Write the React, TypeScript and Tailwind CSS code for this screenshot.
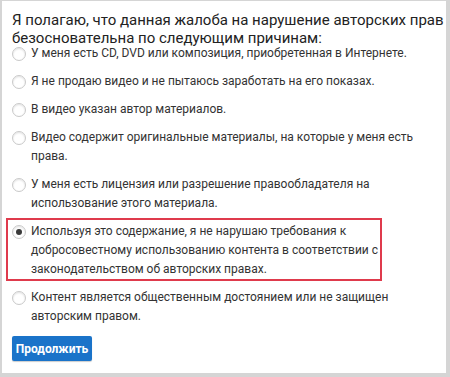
const options = [
  'У меня есть CD, DVD или композиция, приобретенная в Интернете.',
  'Я не продаю видео и не пытаюсь заработать на его показах.',
  'В видео указан автор материалов.',
  'Видео содержит оригинальные материалы, на которые у меня есть права.',
  'У меня есть лицензия или разрешение правообладателя на использование этого материала.',
  'Используя это содержание, я не нарушаю требования к добросовестному использованию контента в соответствии с законодательством об авторских правах.',
  'Контент является общественным достоянием или не защищен авторским правом.',
]

const SELECTED = 5

function Radio({ checked }: { checked: boolean }) {
  return (
    <span className="mt-[2.5px] flex h-[14px] w-[14px] shrink-0 items-center justify-center rounded-full border border-[#c9c9c9] bg-white shadow-[inset_0_1px_2px_rgba(0,0,0,0.12)]">
      {checked && <span className="h-[6px] w-[6px] rounded-full bg-[#3b3b3b]" />}
    </span>
  )
}

export default function App() {
  return (
    <div className="h-[377px] w-[450px] overflow-hidden border-t border-l-2 border-r-4 border-b-4 border-[#d5d5d5] bg-white font-['Roboto',sans-serif]">
      <div className="pl-[10px] pt-[10px]">
        <h1 className="w-[434px] text-[15px] font-normal leading-[18px] text-[#222]">
          Я полагаю, что данная жалоба на нарушение авторских прав безосновательна по следующим причинам:
        </h1>

        <div className="-mt-[3px] flex flex-col gap-[9px]">
          {options.map((text, i) => (
            <label
              key={i}
              className={
                i === SELECTED
                  ? '-mb-[2px] -ml-[6px] -mt-[4px] flex w-[376px] gap-[5px] border-2 border-[#df3a4c] pl-[4px] pt-[2px]'
                  : 'flex w-[410px] gap-[5px]'
              }
            >
              <Radio checked={i === SELECTED} />
              <span className="text-[12px] leading-[19px] text-[#333]">{text}</span>
            </label>
          ))}
        </div>

        <button className="mt-[10px] h-[25px] w-[80px] rounded-[2px] bg-[#1a73c9] text-[12px] font-bold text-white shadow-[0_1px_1px_rgba(0,0,0,0.2)]">
          Продолжить
        </button>
      </div>
    </div>
  )
}
